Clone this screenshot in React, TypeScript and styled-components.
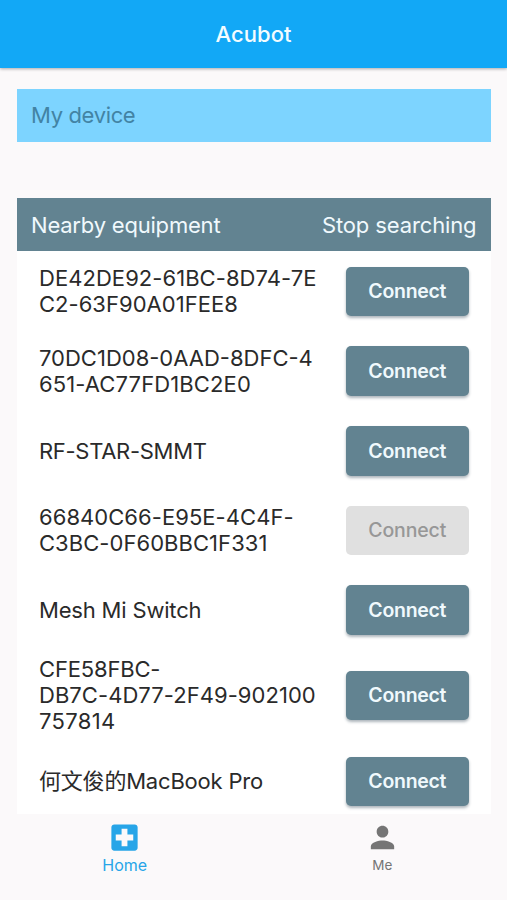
import React from "react";
import styled, { createGlobalStyle } from "styled-components";
import { MdLocalHospital, MdPerson } from "react-icons/md";

const GlobalStyle = createGlobalStyle`
  * { box-sizing: border-box; }
  body { margin: 0; background: #fbf9fa; }
`;

const Screen = styled.div`
  display: flex;
  flex-direction: column;
  width: 507px;
  height: 900px;
  overflow: hidden;
  background: #fbf9fa;
  font-family: Inter, "Noto Sans CJK SC", sans-serif;
`;

const TopBar = styled.header`
  flex: none;
  display: flex;
  align-items: center;
  justify-content: center;
  height: 68px;
  background: #12a8f6;
  box-shadow: 0 1px 3px rgba(0, 0, 0, 0.32);
`;

const Title = styled.h1`
  margin: 0;
  color: #f2fcff;
  font-size: 22px;
  font-weight: 500;
  letter-spacing: 0.05px;
`;

const Content = styled.main`
  flex: none;
  display: flex;
  flex-direction: column;
  height: 746px;
  padding: 20.5px 16.5px 0 17px;
`;

const SectionBar = styled.div<{ $tone: "device" | "nearby" }>`
  flex: none;
  display: flex;
  align-items: center;
  justify-content: space-between;
  height: 53.3px;
  padding: 0 14px;
  margin-bottom: ${(p) => (p.$tone === "device" ? "56.2px" : "0")};
  background: ${(p) => (p.$tone === "device" ? "#7dd4ff" : "#628391")};
  color: ${(p) => (p.$tone === "device" ? "#4283a4" : "#f0f9fd")};
  font-size: 22px;
`;

const BarText = styled.span<{ $spacing: number }>`
  letter-spacing: ${(p) => p.$spacing}px;
  white-space: nowrap;
`;

const DeviceList = styled.ul`
  flex: 1;
  min-height: 0;
  margin: 0;
  padding: 0.5px 0 0;
  overflow: hidden;
  list-style: none;
  background: #fff;
`;

const DeviceRow = styled.li<{ $tall: boolean }>`
  display: flex;
  align-items: center;
  justify-content: space-between;
  height: ${(p) => (p.$tall ? 91.8 : 79.6)}px;
  padding: 0 22px;
`;

const DeviceName = styled.div<{ $multiline: boolean }>`
  display: flex;
  flex-direction: column;
  padding-bottom: ${(p) => (p.$multiline ? 0.6 : 0)}px;
  color: #2a2a2a;
  font-size: 22px;
  line-height: 26px;
`;

const NameLine = styled.span<{ $spacing: number }>`
  height: 26px;
  letter-spacing: ${(p) => p.$spacing}px;
  white-space: nowrap;
`;

const ConnectButton = styled.button`
  flex: none;
  width: 122.5px;
  height: 49.5px;
  padding: 1px 0 0;
  border: 0;
  border-radius: 5px;
  background: #628391;
  color: #f0f9fd;
  font: 600 19.5px/1 Inter, sans-serif;
  letter-spacing: -0.3px;
  box-shadow: 0 2px 3px rgba(40, 60, 75, 0.38);

  &:disabled {
    background: #e0e0e0;
    color: #979797;
    font-weight: 500;
    letter-spacing: -0.15px;
    box-shadow: none;
  }
`;

const TabBar = styled.nav`
  flex: 1;
  display: grid;
  grid-template-columns: 1fr 1fr;
  column-gap: 8px;
`;

const Tab = styled.a<{ $active?: boolean }>`
  display: flex;
  flex-direction: column;
  align-items: center;
  padding-top: 6px;
  color: ${(p) => (p.$active ? "#27a5e8" : "#757575")};
  font-size: ${(p) => (p.$active ? 16 : 13.5)}px;
  line-height: 20px;
`;

type Line = { text: string; spacing: number };
type Device = { lines: Line[]; busy?: boolean };

const line = (text: string, spacing = 0): Line => ({ text, spacing });

const devices: Device[] = [
  { lines: [line("DE42DE92-61BC-8D74-7E", 0.05), line("C2-63F90A01FEE8", 0.03)] },
  { lines: [line("70DC1D08-0AAD-8DFC-4"), line("651-AC77FD1BC2E0", 0.12)] },
  { lines: [line("RF-STAR-SMMT", -0.3)] },
  { lines: [line("66840C66-E95E-4C4F-", 0.05), line("C3BC-0F60BBC1F331", 0.05)], busy: true },
  { lines: [line("Mesh Mi Switch", -0.18)] },
  { lines: [line("CFE58FBC-", -0.17), line("DB7C-4D77-2F49-902100", 0.05), line("757814", 0.35)] },
  { lines: [line("何文俊的MacBook Pro", -0.2)] },
];

export default function App() {
  return (
    <>
      <GlobalStyle />
      <Screen>
        <TopBar>
          <Title>Acubot</Title>
        </TopBar>
        <Content>
          <SectionBar $tone="device">
            <BarText $spacing={-0.35}>My device</BarText>
          </SectionBar>
          <SectionBar $tone="nearby">
            <BarText $spacing={-0.2}>Nearby equipment</BarText>
            <BarText $spacing={-0.12}>Stop searching</BarText>
          </SectionBar>
          <DeviceList>
            {devices.map((device) => (
              <DeviceRow key={device.lines[0].text} $tall={device.lines.length > 2}>
                <DeviceName $multiline={device.lines.length > 1}>
                  {device.lines.map((l) => (
                    <NameLine key={l.text} $spacing={l.spacing}>
                      {l.text}
                    </NameLine>
                  ))}
                </DeviceName>
                <ConnectButton disabled={device.busy}>Connect</ConnectButton>
              </DeviceRow>
            ))}
          </DeviceList>
        </Content>
        <TabBar>
          <Tab $active>
            <MdLocalHospital size={35} />
            <span>Home</span>
          </Tab>
          <Tab>
            <MdPerson size={35} />
            <span>Me</span>
          </Tab>
        </TabBar>
      </Screen>
    </>
  );
}
